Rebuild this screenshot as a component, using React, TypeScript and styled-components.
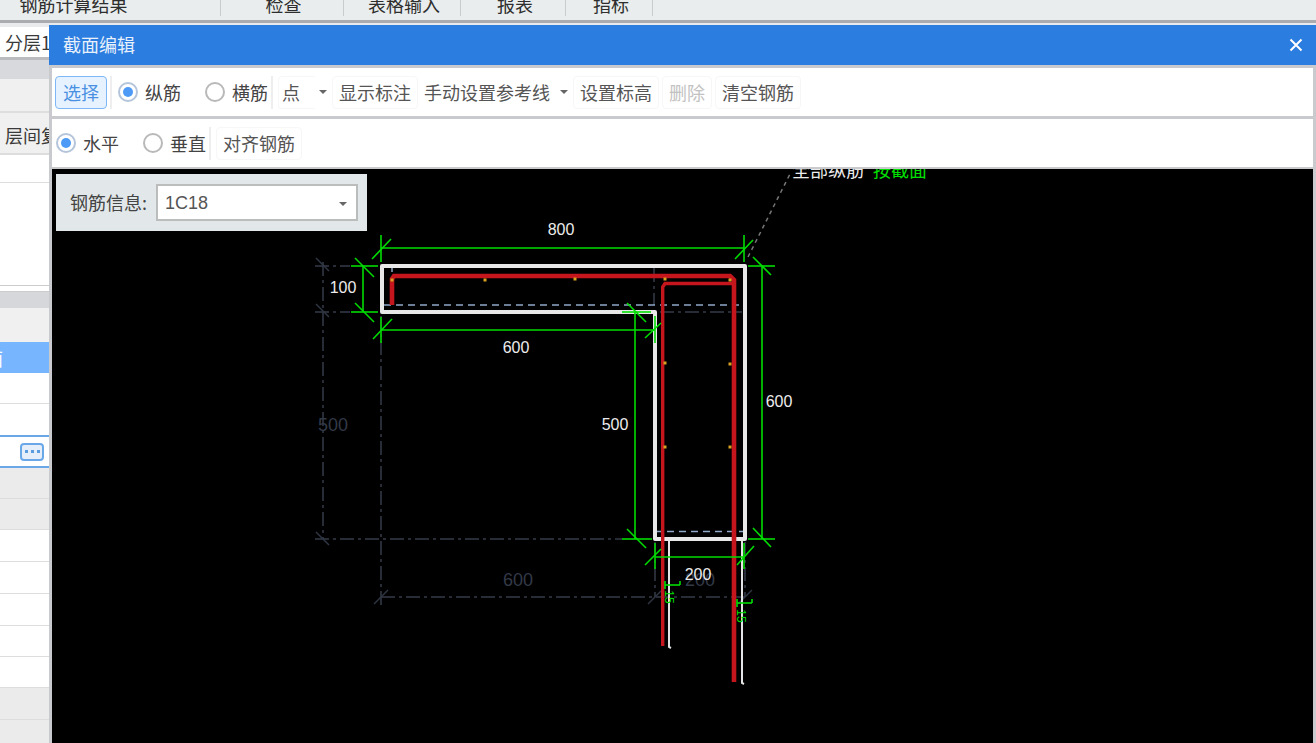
import React from 'react';
import styled, { createGlobalStyle } from 'styled-components';

const GlobalStyle = createGlobalStyle`
  html, body {
    margin: 0;
    padding: 0;
    overflow: hidden;
    background: #ffffff;
  }
  body {
    font-family: "Noto Sans CJK SC", "Liberation Sans", sans-serif;
  }
`;

const Page = styled.div`
  position: relative;
  width: 1316px;
  height: 743px;
  overflow: hidden;
  background: #e8eaec;
`;

const TopBar = styled.div`
  display: flex;
  height: 20px;
  background: #e9eded;
  border-bottom: 3px solid #a9abae;
  overflow: hidden;
`;

const TopTab = styled.div<{ $w: number; $pl?: number; $pr?: number }>`
  width: ${({ $w }) => $w}px;
  height: 16px;
  padding: 0 ${({ $pr }) => $pr || 0}px 0 ${({ $pl }) => $pl || 0}px;
  line-height: 8px;
  font-size: 18px;
  color: #2e2e2e;
  text-align: center;
  border-right: 1px solid #c9cccc;
  box-sizing: border-box;
`;

const LeftPanel = styled.div`
  width: 49px;
  margin-top: 4px;
  overflow: hidden;
`;

const PanelRow = styled.div<{ $h: number; $bg: string }>`
  display: flex;
  align-items: center;
  height: ${({ $h }) => $h}px;
  background: ${({ $bg }) => $bg};
  font-size: 18px;
  white-space: nowrap;
`;

const RowText = styled.span<{ $x: number; $y?: number; $color?: string }>`
  margin-left: ${({ $x }) => $x}px;
  margin-top: ${({ $y }) => $y || 0}px;
  color: ${({ $color }) => $color || '#3a3a3a'};
`;

const ActiveCell = styled.div`
  display: flex;
  align-items: center;
  justify-content: flex-end;
  height: 33px;
  padding-right: 5px;
  box-sizing: border-box;
  background: #fff;
  border-top: 2px solid #6aa7e8;
  border-bottom: 2px solid #6aa7e8;
`;

const MoreButton = styled.div`
  display: flex;
  align-items: center;
  justify-content: center;
  gap: 3px;
  width: 24px;
  height: 18px;
  box-sizing: border-box;
  background: #e6eefa;
  border: 2px solid #6aa7e8;
  border-radius: 4px;
`;

const MoreDot = styled.i`
  width: 3px;
  height: 3px;
  background: #5a9ce0;
`;

const Modal = styled.div`
  position: absolute;
  left: 49px;
  top: 25px;
  right: 0;
  bottom: 0;
  display: flex;
  flex-direction: column;
  background: #c8cacd;
`;

const TitleBar = styled.div`
  display: flex;
  align-items: center;
  justify-content: space-between;
  flex: none;
  height: 40px;
  padding: 0 13px 2px 14px;
  box-sizing: border-box;
  background: #2c7de0;
  color: #e8f1fb;
  font-size: 18px;
`;

const CloseIcon = styled.svg`
  width: 14px;
  height: 14px;
  margin-top: 2px;
  stroke: #fff;
  stroke-width: 2;
  fill: none;
`;

const Body = styled.div`
  display: flex;
  flex: 1;
  flex-direction: column;
  gap: 3px;
  min-height: 0;
  padding: 3px 3px 0 3px;
`;

const ToolRow = styled.div`
  display: flex;
  flex: none;
  align-items: center;
  height: 48px;
  padding-left: 3px;
  background: #fff;
  font-size: 18px;
  color: #555;
  white-space: nowrap;
`;

const ToolButton = styled.div<{ $active?: boolean; $disabled?: boolean; $ml?: number }>`
  display: flex;
  align-items: center;
  height: 33px;
  margin-left: ${({ $ml }) => $ml || 0}px;
  padding: 0 ${({ $active }) => ($active ? 7 : 6)}px;
  box-sizing: border-box;
  border: 1px solid ${({ $active }) => ($active ? '#7db7f5' : '#f7f7f7')};
  border-radius: 4px;
  background: ${({ $active }) => ($active ? '#e6f2ff' : '#fff')};
  color: ${({ $active, $disabled }) => ($active ? '#4a90e2' : $disabled ? '#c2c2c2' : '#555')};
`;

const ToolDivider = styled.div<{ $ml: number; $mr: number }>`
  width: 2px;
  height: 33px;
  margin: 0 ${({ $mr }) => $mr}px 0 ${({ $ml }) => $ml}px;
  background: #eeeeee;
`;

const RadioLabel = styled.label<{ $ml?: number }>`
  display: flex;
  align-items: center;
  gap: 7px;
  margin-left: ${({ $ml }) => $ml || 0}px;
  color: #444;
`;

const RadioMark = styled.span<{ $on?: boolean }>`
  position: relative;
  width: 20px;
  height: 20px;
  margin-top: -1px;
  box-sizing: border-box;
  border: 2px solid ${({ $on }) => ($on ? '#b4c4da' : '#b9b9b9')};
  border-radius: 50%;
  background: #fff;

  &::after {
    content: '';
    display: ${({ $on }) => ($on ? 'block' : 'none')};
    position: absolute;
    left: 3px;
    top: 3px;
    width: 10px;
    height: 10px;
    border-radius: 50%;
    background: #4d9bf7;
  }
`;

const DropField = styled.div`
  display: flex;
  align-items: center;
  width: 37px;
  height: 33px;
  padding-left: 3px;
  box-sizing: border-box;
  border: 1px solid #f7f7f7;
  border-right: none;
  border-radius: 4px 0 0 4px;
`;

const Caret = styled.i<{ $ml: number; $mr?: number }>`
  flex: none;
  width: 0;
  height: 0;
  margin: 0 ${({ $mr }) => $mr || 0}px 0 ${({ $ml }) => $ml}px;
  border-left: 4px solid transparent;
  border-right: 4px solid transparent;
  border-top: 4px solid #666;
`;

const PlainTool = styled.div`
  margin-left: 6px;
`;

const Canvas = styled.div`
  position: relative;
  flex: 1;
  min-height: 0;
  margin-top: -1px;
  background: #000;
  overflow: hidden;
`;

const Drawing = styled.svg`
  display: block;
  width: 100%;
  height: 100%;
  font-family: "Liberation Sans", "Noto Sans CJK SC", sans-serif;
`;

const InfoPanel = styled.div`
  position: absolute;
  left: 4px;
  top: 5px;
  display: flex;
  align-items: center;
  gap: 9px;
  width: 311px;
  height: 57px;
  padding-left: 14px;
  box-sizing: border-box;
  background: #e2e8ea;
  font-size: 18px;
  color: #444;
`;

const InfoLabel = styled.span`
  margin-top: -2px;
`;

const InfoSelect = styled.div`
  display: flex;
  align-items: center;
  justify-content: space-between;
  width: 202px;
  height: 37px;
  padding: 2px 9px 0 7px;
  box-sizing: border-box;
  background: #fff;
  border: 2px solid #bbbdbd;
  color: #555;
  font-family: "Liberation Sans", sans-serif;
`;

const GreenLines = styled.g`
  stroke: #00dc00;
  stroke-width: 1.6;
  fill: none;
`;

const GhostLines = styled.g`
  stroke: #2e3543;
  stroke-width: 1.5;
  fill: none;
`;

const GhostDash = styled.g`
  stroke: #343b49;
  stroke-width: 1.5;
  stroke-dasharray: 14 4 3 4;
  fill: none;
`;

const Outline = styled.path`
  stroke: #e8e8e8;
  stroke-width: 4;
  stroke-linejoin: round;
  fill: none;
`;

const Bar = styled.path`
  stroke: #c4161c;
  fill: none;
`;

const HookLine = styled.path`
  stroke: #e4e4e4;
  stroke-width: 2;
  fill: none;
`;

const BlueDash = styled.path`
  stroke: #8fa8c8;
  stroke-width: 1.5;
  stroke-dasharray: 7 5;
  fill: none;
`;

const DimText = styled.text<{ $ghost?: boolean }>`
  font-size: ${({ $ghost }) => ($ghost ? 18 : 16)}px;
  fill: ${({ $ghost }) => ($ghost ? '#323947' : '#ececec')};
  text-anchor: middle;
`;

const NoteText = styled.text<{ $green?: boolean }>`
  font-size: 18px;
  fill: ${({ $green }) => ($green ? '#00e000' : '#ececec')};
  font-family: "Noto Sans CJK SC", sans-serif;
`;

const HookText = styled.text`
  font-size: 12px;
  fill: #00dc00;
  text-anchor: middle;
`;

type Seg = [number, number, number, number];

const greenSegs: Seg[] = [
  // 800
  [381, 248, 744, 248], [381, 235, 381, 262], [372, 259, 391, 239], [744, 235, 744, 262], [735, 259, 753, 240],
  // 100
  [363, 266, 363, 312], [351, 266, 378, 266], [351, 312, 378, 312], [355, 258, 374, 277], [355, 303, 374, 322],
  // 600 lower
  [381, 330, 655, 330], [381, 317, 381, 343], [373, 339, 392, 319], [655, 316, 655, 343], [645, 338, 661, 323],
  // 500
  [635, 312, 635, 539], [622, 312, 651, 312], [622, 539, 652, 539], [627, 303, 646, 322], [627, 529, 646, 548],
  // 600 right
  [762, 266, 762, 539], [748, 266, 775, 266], [748, 539, 775, 539], [753, 257, 771, 275], [753, 528, 771, 547],
  // 200
  [655, 557, 744, 557], [655, 543, 655, 569], [744, 543, 744, 569], [645, 565, 661, 549], [737, 565, 754, 546],
  // hook lengths
  [665, 585, 680, 585], [665, 581, 665, 589], [680, 581, 680, 585], [737, 603, 752, 603], [737, 599, 737, 607], [752, 599, 752, 603],
];

const ghostTicks: Seg[] = [
  [316, 258, 329, 271], [316, 304, 329, 317], [316, 532, 329, 545], [374, 604, 388, 590], [648, 604, 662, 590], [738, 604, 752, 590],
];

const ghostDashes: Seg[] = [
  [315, 266, 350, 266], [315, 312, 350, 312], [323, 262, 323, 539], [381, 316, 381, 606],
  [315, 539, 622, 539], [381, 597, 745, 597], [655, 542, 655, 597], [745, 542, 745, 597],
  [654, 268, 654, 305], [660, 312, 742, 312],
];

const rebarDots: [number, number][] = [
  [392, 280], [485, 280], [575, 279], [665, 279], [730, 280], [665, 363], [730, 364], [665, 447], [730, 447],
];

const Segs: React.FC<{ items: Seg[] }> = ({ items }) => (
  <>
    {items.map(([x1, y1, x2, y2], i) => (
      <line key={i} x1={x1} y1={y1} x2={x2} y2={y2} />
    ))}
  </>
);

const SectionDrawing: React.FC = () => (
  <Drawing viewBox="52 169 1261 574">
    <GhostDash><Segs items={ghostDashes} /></GhostDash>
    <GhostLines><Segs items={ghostTicks} /></GhostLines>
    <DimText $ghost x={333} y={431}>500</DimText>
    <DimText $ghost x={518} y={586}>600</DimText>
    <DimText $ghost x={700} y={586}>200</DimText>

    <BlueDash d="M384 305H743M392 265V276M655 531.5H743" />
    <HookLine d="M669 541V647L671 648M742 541V683L744 684" />
    <Outline d="M382 266H745V539H655V312H382Z" />
    <Bar strokeWidth={4.6} d="M392 305V279L394 276H730L734 280V682" />
    <Bar strokeWidth={3.4} d="M662.7 646V287L665 283.5H733" />
    {rebarDots.map(([x, y]) => (
      <rect key={`${x}-${y}`} x={x - 1.5} y={y - 1.5} width={3} height={3} fill="#d8a020" />
    ))}

    <GreenLines><Segs items={greenSegs} /></GreenLines>
    <HookText transform="translate(665 597) rotate(90)">15</HookText>
    <HookText transform="translate(737 616) rotate(90)">15</HookText>

    <path d="M748 257L790 174" stroke="#777" strokeWidth={1.5} strokeDasharray="4 4" fill="none" />
    <NoteText x={792} y={177}>全部纵筋</NoteText>
    <NoteText $green x={873} y={177}>按截面</NoteText>

    <DimText x={561} y={235}>800</DimText>
    <DimText x={343} y={293}>100</DimText>
    <DimText x={516} y={353}>600</DimText>
    <DimText x={615} y={430}>500</DimText>
    <DimText x={779} y={407}>600</DimText>
    <DimText x={698} y={580}>200</DimText>
  </Drawing>
);

const App: React.FC = () => {
  return (
    <Page>
      <GlobalStyle />
      <TopBar>
        <TopTab $w={221} $pr={73}>钢筋计算结果</TopTab>
        <TopTab $w={123} $pl={3}>检查</TopTab>
        <TopTab $w={117} $pl={4}>表格输入</TopTab>
        <TopTab $w={105} $pl={4}>报表</TopTab>
        <TopTab $w={87} $pl={4}>指标</TopTab>
      </TopBar>

      <LeftPanel>
        <PanelRow $h={30} $bg="#fff"><RowText $x={5}>分层1</RowText></PanelRow>
        <PanelRow $h={3} $bg="#b9bbbe" />
        <PanelRow $h={19} $bg="#d7d9dc" />
        <PanelRow $h={32} $bg="#f0f0f0" />
        <PanelRow $h={2} $bg="#dddddd" />
        <PanelRow $h={40} $bg="#f0f0f0"><RowText $x={5} $y={3}>层间复</RowText></PanelRow>
        <PanelRow $h={2} $bg="#dddddd" />
        <PanelRow $h={27} $bg="#fff" />
        <PanelRow $h={1} $bg="#dddddd" />
        <PanelRow $h={102} $bg="#fff" />
        <PanelRow $h={1} $bg="#cccccc" />
        <PanelRow $h={5} $bg="#fff" />
        <PanelRow $h={1} $bg="#cccccc" />
        <PanelRow $h={16} $bg="#d5d7da" />
        <PanelRow $h={34} $bg="#f0f0f0" />
        <PanelRow $h={31} $bg="#77b6ff"><RowText $x={-15} $color="#fff">面</RowText></PanelRow>
        <PanelRow $h={30} $bg="#fff" />
        <PanelRow $h={1} $bg="#dddddd" />
        <PanelRow $h={31} $bg="#fff" />
        <ActiveCell><MoreButton><MoreDot /><MoreDot /><MoreDot /></MoreButton></ActiveCell>
        <PanelRow $h={30} $bg="#ebebeb" />
        <PanelRow $h={1} $bg="#dddddd" />
        <PanelRow $h={30} $bg="#ebebeb" />
        <PanelRow $h={1} $bg="#dddddd" />
        <PanelRow $h={31} $bg="#fff" />
        <PanelRow $h={1} $bg="#dddddd" />
        <PanelRow $h={31} $bg="#fff" />
        <PanelRow $h={1} $bg="#dddddd" />
        <PanelRow $h={31} $bg="#fff" />
        <PanelRow $h={1} $bg="#dddddd" />
        <PanelRow $h={30} $bg="#fff" />
        <PanelRow $h={1} $bg="#dddddd" />
        <PanelRow $h={30} $bg="#fff" />
        <PanelRow $h={1} $bg="#dddddd" />
        <PanelRow $h={31} $bg="#ebebeb" />
        <PanelRow $h={1} $bg="#dddddd" />
        <PanelRow $h={23} $bg="#ebebeb" />
      </LeftPanel>

      <Modal>
        <TitleBar>
          <span>截面编辑</span>
          <CloseIcon viewBox="0 0 14 14"><path d="M1.5 1.5L12.5 12.5M12.5 1.5L1.5 12.5" /></CloseIcon>
        </TitleBar>
        <Body>
          <ToolRow>
            <ToolButton $active>选择</ToolButton>
            <ToolDivider $ml={3} $mr={6} />
            <RadioLabel><RadioMark $on />纵筋</RadioLabel>
            <RadioLabel $ml={24}><RadioMark />横筋</RadioLabel>
            <ToolDivider $ml={3} $mr={5} />
            <DropField>点</DropField>
            <Caret $ml={4} $mr={5} />
            <ToolButton>显示标注</ToolButton>
            <PlainTool>手动设置参考线</PlainTool>
            <Caret $ml={10} $mr={5} />
            <ToolButton>设置标高</ToolButton>
            <ToolButton $disabled $ml={3}>删除</ToolButton>
            <ToolButton $ml={3}>清空钢筋</ToolButton>
          </ToolRow>
          <ToolRow>
            <RadioLabel $ml={1}><RadioMark $on />水平</RadioLabel>
            <RadioLabel $ml={24}><RadioMark />垂直</RadioLabel>
            <ToolDivider $ml={3} $mr={5} />
            <ToolButton>对齐钢筋</ToolButton>
          </ToolRow>
          <Canvas>
            <SectionDrawing />
            <InfoPanel>
              <InfoLabel>钢筋信息:</InfoLabel>
              <InfoSelect>1C18<Caret $ml={0} /></InfoSelect>
            </InfoPanel>
          </Canvas>
        </Body>
      </Modal>
    </Page>
  );
};

export default App;
